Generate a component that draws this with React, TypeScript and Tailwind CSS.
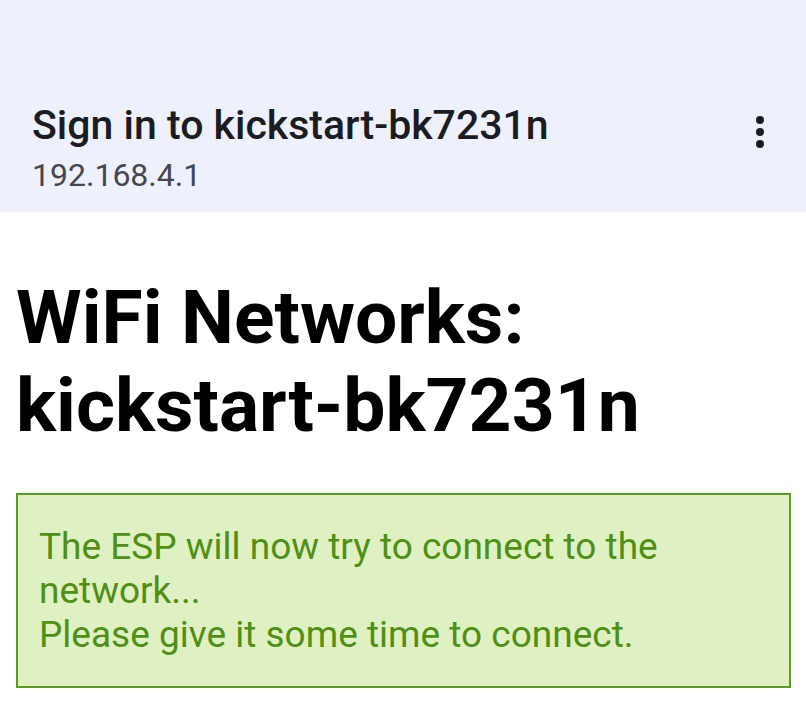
import React from "react";

const App = () => {
  return (
    <div className="w-[806px] h-[717px] bg-white font-['Roboto',sans-serif] overflow-hidden">
      {/* captive portal bar */}
      <div className="h-[212px] bg-[#eef0fb] flex items-end justify-between pl-[32px] pr-[42px] pb-[16px]">
        <div className="flex flex-col">
          <p className="text-[41px] leading-[46px] font-medium text-[#1b1c22] mb-[6px]">
            Sign in to kickstart-bk7231n
          </p>
          <p className="text-[32px] leading-[42px] text-[#45464f]">192.168.4.1</p>
        </div>
        <div className="flex flex-col items-center gap-[4px] mb-[48px]">
          <span className="w-[8px] h-[8px] rounded-full bg-[#1b1c22]"></span>
          <span className="w-[8px] h-[8px] rounded-full bg-[#1b1c22]"></span>
          <span className="w-[8px] h-[8px] rounded-full bg-[#1b1c22]"></span>
        </div>
      </div>
      {/* page */}
      <div className="px-[16px] pt-[61px]">
        <h1 className="text-[75px] leading-[88px] font-bold text-black">
          WiFi Networks:
          <br />
          kickstart-bk7231n
        </h1>
        <div className="mt-[44px] mr-[-1px] border-2 border-[#5a9a1e] bg-[#dff1c3] pl-[21px] pr-[16px] pt-[30px] pb-[29px]">
          <p className="text-[37px] leading-[44px] text-[#4f8f13]">
            The ESP will now try to connect to the network...
            <br />
            Please give it some time to connect.
          </p>
        </div>
      </div>
    </div>
  );
};

export default App;
